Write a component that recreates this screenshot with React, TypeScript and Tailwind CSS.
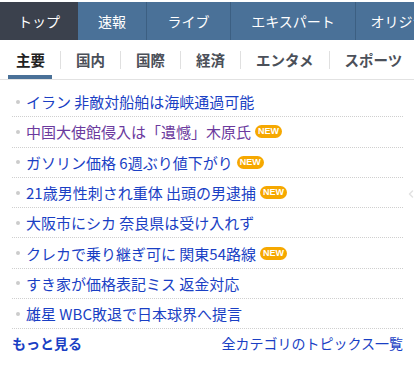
import { ChevronLeft } from 'lucide-react';

interface Topic {
  id: number;
  title: string;
  isNew?: boolean;
  visited?: boolean;
}

const mainTabs = [
  { name: 'トップ', width: 'w-[78px]', active: true },
  { name: '速報', width: 'w-[68px]' },
  { name: 'ライブ', width: 'w-[84px]' },
  { name: 'エキスパート', width: 'w-[125px]' },
  { name: 'オリジナル', width: 'w-[100px]' },
];

const subTabs = ['主要', '国内', '国際', '経済', 'エンタメ', 'スポーツ'];

const topics: Topic[] = [
  { id: 1, title: 'イラン 非敵対船舶は海峡通過可能' },
  { id: 2, title: '中国大使館侵入は「遺憾」木原氏', isNew: true, visited: true },
  { id: 3, title: 'ガソリン価格 6週ぶり値下がり', isNew: true },
  { id: 4, title: '21歳男性刺され重体 出頭の男逮捕', isNew: true },
  { id: 5, title: '大阪市にシカ 奈良県は受け入れず' },
  { id: 6, title: 'クレカで乗り継ぎ可に 関東54路線', isNew: true },
  { id: 7, title: 'すき家が価格表記ミス 返金対応' },
  { id: 8, title: '雄星 WBC敗退で日本球界へ提言' },
];

export default function App() {
  return (
    <div
      className="relative w-[414px] h-[365px] overflow-hidden bg-white"
      style={{ fontFamily: '"Noto Sans CJK JP", "Noto Sans", sans-serif' }}
    >
      {/* Main tabs */}
      <div className="mt-[2px] flex h-[38px] bg-[#4a7198] whitespace-nowrap">
        {mainTabs.map((tab, i) => (
          <div
            key={tab.name}
            className={`${tab.width} shrink-0 flex items-center justify-center text-[14px] text-white ${
              tab.active ? 'bg-[#3b414d]' : ''
            } ${i > 1 ? 'border-l border-[#3c5f82]' : ''}`}
          >
            {tab.name}
          </div>
        ))}
      </div>

      {/* Sub tabs */}
      <div className="flex h-[40px] items-center border-b border-[#e2e2e2] pl-[1px] whitespace-nowrap">
        {subTabs.map((tab, i) => (
          <div key={tab} className="flex h-full items-center">
            {i > 0 && <span className="h-[18px] w-px bg-[#e0e0e0]" />}
            <div
              className={`relative flex h-full items-center px-[15px] text-[14.5px] font-bold ${
                i === 0 ? 'text-[#222]' : 'text-[#4b5059]'
              }`}
            >
              {tab}
              {i === 0 && <span className="absolute bottom-0 left-[7px] right-[8px] h-[4px] bg-[#4a7198]" />}
            </div>
          </div>
        ))}
      </div>

      {/* Topics list */}
      <ul className="mx-[12px] mt-[7px] w-[391px]">
        {topics.map((t) => (
          <li
            key={t.id}
            className="flex h-[30.3px] items-center border-b border-dotted border-[#cfcfcf] pl-[4px]"
          >
            <span className="mr-[6px] h-[4px] w-[4px] rounded-full bg-[#cccccc]" />
            <span className={`text-[15px] leading-none ${t.visited ? 'text-[#6b3a9e]' : 'text-[#1a3fc4]'}`}>
              {t.title}
            </span>
            {t.isNew && (
              <span
                className="ml-[4px] flex h-[13px] w-[27px] items-center justify-center rounded-full bg-[#f6a800] text-[9px] font-bold leading-none text-white"
                style={{ fontFamily: '"Liberation Sans", Arial, sans-serif' }}
              >
                NEW
              </span>
            )}
          </li>
        ))}
      </ul>

      {/* Footer */}
      <div className="mx-[12px] mt-[4px] flex w-[391px] items-center justify-between">
        <span className="text-[14px] font-bold text-[#1a3fc4]">もっと見る</span>
        <span className="text-[14px] text-[#1a3fc4]">全カテゴリのトピックス一覧</span>
      </div>

      {/* Carousel arrow peeking from the right edge */}
      <ChevronLeft className="absolute left-[405px] top-[188px] h-[12px] w-[12px] text-[#e2e2e2]" strokeWidth={3} />
    </div>
  );
}
